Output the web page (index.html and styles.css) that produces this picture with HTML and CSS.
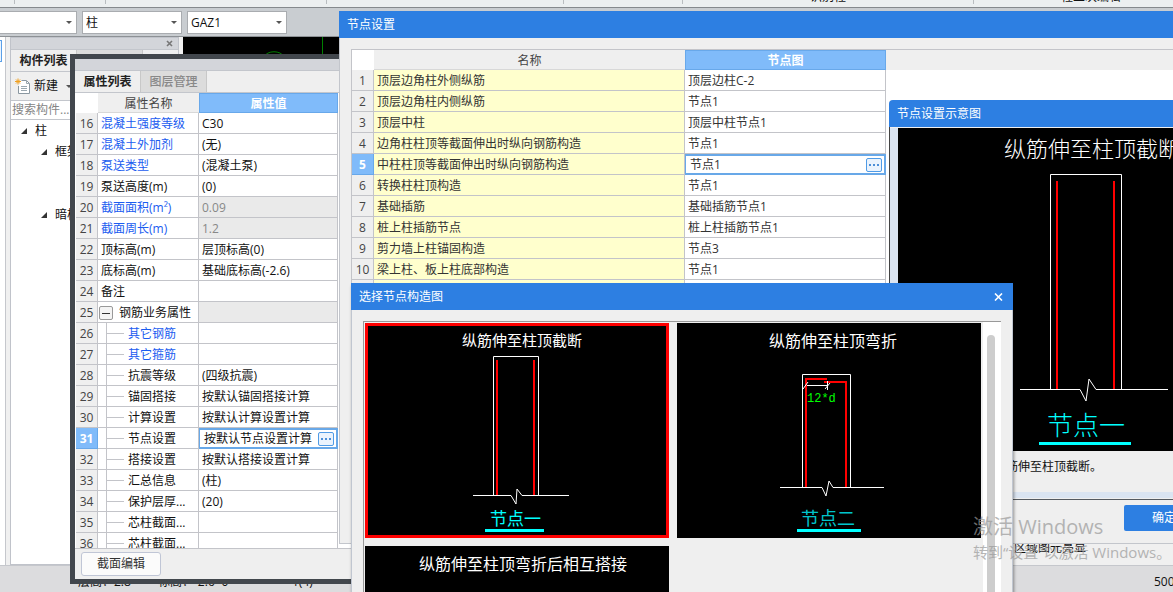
FILE: index.html
```html
<!DOCTYPE html>
<html lang="zh-CN">
<head>
<meta charset="utf-8">
<title>节点设置</title>
<link rel="stylesheet" href="styles.css">
</head>
<body>
<div class="desktop">
  <div class="app">
    <div class="ribbon">
      <span class="group g1"></span><span class="group g2"></span><span class="group g3"></span><span class="group g4"></span><span class="group g5"></span><span class="group g6">识别柱</span><span class="group g7">柱二次编辑</span>
    </div>
    <div class="toolbar">
      <span class="combo first"><select aria-label="楼层"><option></option></select></span>
      <span class="combo"><select aria-label="构件类型"><option>柱</option></select></span>
      <span class="combo"><select aria-label="构件名称"><option>GAZ1</option></select></span>
    </div>
    <div class="workspace">
      <div class="rail"><button class="rail-btn" aria-label="导航"></button></div>
      <div class="panel">
        <div class="panel-title"><button class="plain" aria-label="关闭"><svg width="7" height="7" viewBox="0 0 7 7"><path d="M1 1l5 5M6 1l-5 5" stroke="#777" stroke-width="1.6"/></svg></button></div>
        <div class="tabs"><button class="tab active">构件列表</button><button class="tab">&nbsp;</button></div>
        <div class="panel-tools">
          <button class="plain new-btn">
            <svg width="16" height="17" viewBox="0 0 16 17"><path d="M6.500 2.500H11.500L14.500 5.500V15.500H3.500V8" fill="#fff" stroke="#8a97a0"/><path d="M11.500 2.500V5.500H14.500M6 8.500H12M6 10.500H12M6 12.500H12" fill="none" stroke="#9aa7af"/><path d="M0 3.500H6M3 .5V6.500M1 1.500L5 5.500M5 1.500L1 5.500" stroke="#f0a020"/></svg>
            <span>新建</span><i class="arrow"></i>
          </button>
        </div>
        <input class="search" type="text" placeholder="搜索构件..." aria-label="搜索构件">
        <ul class="tree">
          <li><i class="tri"></i>柱</li>
          <li class="sub"><i class="tri"></i>框架柱</li>
          <li class="gap"></li>
          <li class="gap"></li>
          <li class="sub"><i class="tri"></i>暗柱</li>
        </ul>
      </div>
      <div class="canvas"><svg width="160" height="20" viewBox="0 0 160 20"><path d="M139.500 0V20" stroke="#008000"/><path d="M81 20C84 13 98 13 101 20" fill="none" stroke="#008000"/></svg></div>
      <div class="canvas-note">区域图元亮显</div>
    </div>
    <div class="status"><span class="s1">层高：2.8</span><span class="s2">标高：-2.6~0</span><span class="s3">1(4)</span><span class="s4">500</span></div>
  </div>

  <section class="prop-window">
    <div class="prop-title"></div>
    <div class="tabs"><button class="tab active">属性列表</button><button class="tab">图层管理</button></div>
    <div class="prop-body">
      <table class="grid prop-grid">
        <colgroup><col class="c-num"><col class="c-name"><col class="c-val"></colgroup>
        <thead><tr><th class="corner"></th><th>属性名称</th><th class="hot">属性值</th></tr></thead>
        <tbody>
          <tr><th>16</th><td class="link">混凝土强度等级</td><td>C30</td></tr>
          <tr><th>17</th><td class="link">混凝土外加剂</td><td>(无)</td></tr>
          <tr><th>18</th><td class="link">泵送类型</td><td>(混凝土泵)</td></tr>
          <tr><th>19</th><td>泵送高度(m)</td><td>(0)</td></tr>
          <tr><th>20</th><td class="link">截面面积(m²)</td><td class="off">0.09</td></tr>
          <tr><th>21</th><td class="link">截面周长(m)</td><td class="off">1.2</td></tr>
          <tr><th>22</th><td>顶标高(m)</td><td>层顶标高(0)</td></tr>
          <tr><th>23</th><td>底标高(m)</td><td>基础底标高(-2.6)</td></tr>
          <tr><th>24</th><td>备注</td><td></td></tr>
          <tr><th>25</th><td class="parent"><div class="branch"><button class="fold" aria-label="折叠"></button>钢筋业务属性</div></td><td class="off"></td></tr>
          <tr><th>26</th><td class="child link">其它钢筋</td><td></td></tr>
          <tr><th>27</th><td class="child link">其它箍筋</td><td></td></tr>
          <tr><th>28</th><td class="child">抗震等级</td><td>(四级抗震)</td></tr>
          <tr><th>29</th><td class="child">锚固搭接</td><td>按默认锚固搭接计算</td></tr>
          <tr><th>30</th><td class="child">计算设置</td><td>按默认计算设置计算</td></tr>
          <tr class="current"><th>31</th><td class="child">节点设置</td><td class="edit"><div class="cell">按默认节点设置计算<button class="more" aria-label="更多"><i></i><i></i><i></i></button></div></td></tr>
          <tr><th>32</th><td class="child">搭接设置</td><td>按默认搭接设置计算</td></tr>
          <tr><th>33</th><td class="child">汇总信息</td><td>(柱)</td></tr>
          <tr><th>34</th><td class="child">保护层厚...</td><td>(20)</td></tr>
          <tr><th>35</th><td class="child">芯柱截面...</td><td></td></tr>
          <tr><th>36</th><td class="child">芯柱截面...</td><td></td></tr>
        </tbody>
      </table>
    </div>
    <div class="prop-foot"><button class="section-btn">截面编辑</button></div>
  </section>

  <section class="node-dialog">
    <header class="bar">节点设置</header>
    <div class="node-body">
      <table class="grid node-grid">
        <colgroup><col class="c-num"><col class="c-title"><col class="c-node"><col></colgroup>
        <thead><tr><th class="corner"></th><th>名称</th><th class="hot">节点图</th><th class="rest"></th></tr></thead>
        <tbody>
          <tr><th>1</th><td class="name">顶层边角柱外侧纵筋</td><td>顶层边柱C-2</td><td class="rest"></td></tr>
          <tr><th>2</th><td class="name">顶层边角柱内侧纵筋</td><td>节点1</td><td class="rest"></td></tr>
          <tr><th>3</th><td class="name">顶层中柱</td><td>顶层中柱节点1</td><td class="rest"></td></tr>
          <tr><th>4</th><td class="name">边角柱柱顶等截面伸出时纵向钢筋构造</td><td>节点1</td><td class="rest"></td></tr>
          <tr class="current"><th>5</th><td class="name">中柱柱顶等截面伸出时纵向钢筋构造</td><td class="edit"><div class="cell">节点1<button class="more" aria-label="更多"><i></i><i></i><i></i></button></div></td><td class="rest"></td></tr>
          <tr><th>6</th><td class="name">转换柱柱顶构造</td><td>节点1</td><td class="rest"></td></tr>
          <tr><th>7</th><td class="name">基础插筋</td><td>基础插筋节点1</td><td class="rest"></td></tr>
          <tr><th>8</th><td class="name">桩上柱插筋节点</td><td>桩上柱插筋节点1</td><td class="rest"></td></tr>
          <tr><th>9</th><td class="name">剪力墙上柱锚固构造</td><td>节点3</td><td class="rest"></td></tr>
          <tr><th>10</th><td class="name">梁上柱、板上柱底部构造</td><td>节点1</td><td class="rest"></td></tr>
          <tr><th></th><td class="name"></td><td></td><td class="rest"></td></tr>
        </tbody>
      </table>
    </div>
    <footer class="node-foot"><button class="primary">确定</button></footer>
  </section>

  <section class="preview">
    <header class="bar">节点设置示意图</header>
    <div class="preview-body">
      <svg class="big-draw" width="340" height="323" viewBox="0 0 340 323">
        <rect width="340" height="323" fill="#000"/>
        <text x="106" y="29" class="cad light" font-size="22">纵筋伸至柱顶截断</text>
        <path d="M152.500 261V46.500H223.500V261M122 261.500H182L188 273L191 251L198 261.500H270" class="white"/>
        <path d="M159 53V261M216 53V261" class="bars"/>
        <text x="149" y="307" class="cad light cyan" font-size="26">节点一</text>
        <rect x="141" y="314" width="92" height="3" fill="#0ff"/>
      </svg>
      <p class="preview-text">纵筋伸至柱顶截断。</p>
    </div>
  </section>

  <section class="picker">
    <header class="bar">选择节点构造图<button class="plain" aria-label="关闭"><svg width="9" height="8" viewBox="0 0 9 8"><path d="M1 .5L8 7.500M8 .5L1 7.500" stroke="#fff" stroke-width="1.6"/></svg></button></header>
    <div class="picker-list">
      <div class="cards">
        <svg class="card" width="304" height="215" viewBox="0 0 304 215">
          <rect width="304" height="215" fill="#000"/>
          <rect x="1.500" y="1.500" width="301" height="212" fill="none" stroke="#f00" stroke-width="3"/>
          <text x="97" y="23" class="cad" font-size="15">纵筋伸至柱顶截断</text>
          <path d="M128.500 172V33.500H173.500V172M108 172.500H146L151 181L152 166L157 172.500H204" class="white"/>
          <path d="M132 37V172M169 37V172" class="bars"/>
          <text x="125" y="202" class="cad cyan" font-size="17">节点一</text>
          <rect x="120" y="206" width="59" height="3" fill="#0ff"/>
        </svg>
        <svg class="card" width="304" height="215" viewBox="0 0 304 215">
          <rect width="304" height="215" fill="#000"/>
          <text x="92" y="24" class="cad" font-size="16">纵筋伸至柱顶弯折</text>
          <path d="M125.500 164V51.500H173.500V164M103 164.500H145L149 173L152 158L156 164.500H207" class="white"/>
          <path d="M129 164V56H150M147 59H169V164" class="bars"/>
          <path d="M130 62.500H150M126 66L131 59M150.500 58V67M148 66L153 60" class="white"/>
          <text x="130" y="79" class="dim" font-size="12">12*d</text>
          <text x="124" y="202" class="cad cyan dark" font-size="18">节点二</text>
          <rect x="120" y="206" width="64" height="3" fill="#0ff"/>
        </svg>
        <svg class="card" width="304" height="215" viewBox="0 0 304 215">
          <rect width="304" height="215" fill="#000"/>
          <text x="54" y="24" class="cad" font-size="16">纵筋伸至柱顶弯折后相互搭接</text>
        </svg>
      </div>
      <div class="scroll"><div class="thumb"></div></div>
    </div>
  </section>

  <div class="watermark"><div class="w1">激活 Windows</div><div class="w2">转到“设置”以激活 Windows。</div></div>
</div>
</body>
</html>
```
FILE: styles.css
```css
* { box-sizing: border-box; }
body {
  margin: 0;
  font: 12px/20px "Open Sans", "Noto Sans CJK SC", sans-serif;
  color: #111;
}
button, input, select { font: inherit; color: inherit; }
button { padding: 0; }
.plain { border: 0; background: none; display: flex; align-items: center; }
.desktop { position: relative; height: 100vh; overflow: hidden; background: #f0f0f0; }
.app { display: flex; flex-direction: column; height: 100%; }

.ribbon { display: flex; flex: none; height: 8px; background: #eceff0; border-bottom: 1px solid #85898d; }
.group { flex: none; height: 4px; border-right: 1px solid #b9bdc0; display: flex; align-items: flex-end; justify-content: center; line-height: 14px; overflow: hidden; }
.g1 { width: 15px; }
.g2 { width: 91px; }
.g3 { width: 221px; }
.g4 { width: 237px; }
.g5 { width: 119px; }
.g6 { width: 291px; }
.g7 { width: 235px; }

.toolbar { display: flex; flex: none; gap: 5px; height: 29px; padding-top: 3px; background: #c9cdd1; border-bottom: 1px solid #8d9195; }
.combo { position: relative; width: 100px; height: 23px; }
.combo.first { width: 77px; }
.combo::after { content: ""; position: absolute; right: 5px; top: 10px; border: 3px solid transparent; border-top: 3px solid #555; border-bottom: 0; }
.combo select { width: 100%; height: 100%; appearance: none; border: 1px solid #a9acb0; border-radius: 0; background: #fff; padding: 0 3px; line-height: 20px; color: #111; }
.combo.first select { border-left: 0; }

.workspace { display: flex; flex: 1; min-height: 0; position: relative; }
.rail { width: 6px; margin-right: 4px; background: #fff; border-right: 1px solid #c5c7cc; }
.rail-btn { display: block; width: 2px; height: 22px; margin-top: 3px; border: 1px solid #5ba0e8; border-left: 0; background: #eaf4ff; }
.panel { width: 169px; display: flex; flex-direction: column; border: 1px solid #c0c3ca; background: #fff; margin-right: 4px; }
.panel-title { height: 11px; background: #d3d5da; display: flex; justify-content: flex-end; align-items: center; padding-right: 5px; }
.tabs { display: flex; flex: none; height: 23px; background: #efefef; border-top: 1px solid #c3c6cc; border-bottom: 1px solid #c3c6cc; }
.tab { width: 66px; border: 0; border-right: 1px solid #c8c8c8; background: #dcdcdc; color: #888; font-weight: 500; padding-top: 1px; }
.tab.active { background: #efefef; color: #222; font-weight: 700; }
.panel-tools { height: 29px; background: #efefef; border-bottom: 1px solid #c3c6cc; display: flex; padding-left: 4px; }
.new-btn span { margin: 0 8px 0 3px; }
.arrow { border: 3px solid transparent; border-top-color: #555; border-bottom: 0; }
.search { height: 19px; border: 0; border-bottom: 1px solid #c3c6cc; padding: 0 1px; background: #fff; }
.search::placeholder { color: #858585; opacity: 1; }
.tree { list-style: none; margin: 0; padding: 0; }
.tree li { height: 21px; padding-left: 10px; display: flex; align-items: center; gap: 8px; white-space: nowrap; }
.tree .sub { padding-left: 30px; }
.tri { border-left: 6px solid transparent; border-bottom: 6px solid #333; }
.canvas { flex: 1; background: #000; margin-bottom: 22px; }
.canvas svg { display: block; }
.canvas-note { position: absolute; left: 1014px; bottom: 7px; }
.status { flex: none; display: flex; height: 27px; background: #dcdcde; border-top: 1px solid #c5c7cc; line-height: 32px; padding-left: 78px; white-space: nowrap; }
.s1 { width: 80px; }
.s2 { width: 134px; }
.s3 { flex: 1; }
.s4 { width: 19px; }

.grid { border-collapse: separate; border-spacing: 0; table-layout: fixed; }
.grid th, .grid td { height: 21px; padding: 2px 0 0 3px; border-right: 1px solid #c3c4c9; border-bottom: 1px solid #c3c4c9; background: #fff; white-space: nowrap; overflow: hidden; text-align: left; line-height: 18px; font-weight: 400; }
.grid th { background: #efefef; text-align: center; padding: 2px 0 0; color: #444; }
.grid thead th { height: 20px; line-height: 16px; border-right: 0; border-bottom-color: #d8d8d8; }
.grid .corner { background: #fff; border-bottom: 0; }
.grid .hot { background: #80bbfa; color: #fff; font-weight: 700; border: 1px solid #68a8ea; }
.grid .current th { background: #80bbfa; color: #fff; font-weight: 700; border-color: #68a8ea; }
.grid .link { color: #1a5cf0; }
.grid .off { background: #eaeaea; color: #888; }
.grid .edit { padding: 0; border: 0; }
.cell { display: flex; align-items: center; justify-content: space-between; height: 21px; margin-left: -1px; border: 2px solid #68a8e8; padding: 0 2px 0 4px; }
.more { width: 16px; height: 14px; border: 1px solid #4f9be6; border-radius: 2px; background: #eaf3fd; display: flex; align-items: center; justify-content: center; gap: 2px; }
.more i { width: 2px; height: 2px; background: #4c8fd8; }
.c-num { width: 22px; }

.prop-window { position: absolute; left: 70px; top: 54px; bottom: 8px; width: 320px; border: 5px solid #42474d; display: flex; flex-direction: column; background: #fff; }
.prop-title { height: 11px; background: #d3d5da; }
.prop-body { flex: 1; min-height: 0; overflow: hidden; padding-left: 1px; }
.prop-grid { width: 262px; }
.prop-grid .c-name { width: 101px; }
.prop-grid .child { padding-left: 30px; background: linear-gradient(#c3c4c9, #c3c4c9) 8px 0 / 1px 100% no-repeat, linear-gradient(#c3c4c9, #c3c4c9) 8px 10px / 18px 1px no-repeat, #fff; }
.prop-grid .parent { padding-left: 1px; }
.branch { display: flex; align-items: center; gap: 6px; }
.fold { width: 14px; height: 14px; border: 1px solid #999; border-radius: 2px; background: linear-gradient(#333, #333) center / 8px 1px no-repeat, #f4f4f4; }
.prop-foot { height: 31px; background: #efefef; border-top: 1px solid #c3c4c9; padding: 3px 6px; }
.section-btn { width: 80px; height: 24px; border: 1px solid #c0c6d6; border-radius: 3px; background: #fbfbfb; color: #333; }

.bar { display: flex; flex: none; align-items: center; justify-content: space-between; height: 27px; padding: 0 10px 0 8px; background: #2d7fe2; color: #fff; }
.node-dialog { position: absolute; left: 339px; right: -45px; top: 11px; bottom: 48px; display: flex; flex-direction: column; background: #efefef; border-bottom: 1px solid #c3c6cc; }
.node-body { flex: 1; min-height: 0; padding: 11px 0 0 11px; border-left: 1px solid #c3c6cc; overflow: hidden; }
.node-grid { width: 100%; border-top: 1px solid #c3c4c9; border-left: 1px solid #c3c4c9; }
.node-grid td { color: #333; }
.node-grid .c-title { width: 311px; }
.node-grid .c-node { width: 201px; }
.node-grid .name { background: #ffffcd; }
.node-grid td.rest { border: 0; }
.node-grid th.rest { border: 0; }
.node-foot { height: 43px; padding: 5px 14px 0 0; border-left: 1px solid #c3c6cc; display: flex; justify-content: flex-end; }
.primary { width: 80px; height: 26px; border: 0; border-radius: 2px; background: #2d7fe2; color: #fff; }

.preview { position: absolute; left: 889px; right: -65px; top: 100px; background: #efefef; border-bottom: 1px solid #555a60; border-radius: 4px 0 0; overflow: hidden; }
.preview-body { border-left: 1px solid #444; border-bottom: 1px solid #efefef; padding-top: 1px; }
.preview-body::after { content: ""; display: block; height: 6px; background: #dae4f1; }
.big-draw { display: block; width: 100%; border-left: 8px solid #dae4f1; }
.preview-text { margin: 0; padding: 6px 8px 15px 96px; border-left: 8px solid #dae4f1; }
.cad { font-family: "Noto Sans CJK SC", sans-serif; fill: #fff; }
.light { font-weight: 300; }
.cyan { fill: #0ff; }
.dark { fill: #00c4cc; }
.dim { font-family: "Liberation Mono", monospace; fill: #0f0; }
.white { fill: none; stroke: #fff; stroke-width: 1; }
.bars { fill: none; stroke: #f00; stroke-width: 2; }

.picker { position: absolute; left: 351px; top: 283px; bottom: 0; width: 662px; display: flex; flex-direction: column; background: #efefef; box-shadow: 1px 3px 3px #0006; }
.picker-list { flex: 1; min-height: 0; padding: 11px 11px 0; border: 1px solid #c0c6d0; border-width: 0 1px; display: flex; overflow: hidden; }
.cards { flex: 1; border: 1px solid #999; border-right: 0; border-bottom: 0; padding: 1px; display: flex; flex-wrap: wrap; align-content: flex-start; gap: 8px; }
.card { display: block; flex: none; }
.scroll { width: 18px; border-top: 1px solid #999; background: #fff; padding: 13px 6px 0 4px; display: flex; }
.thumb { flex: 1; border-radius: 4px 4px 0 0; background: #cdcdcd; }

.watermark { position: absolute; left: 973px; top: 512px; color: #999; opacity: .7; white-space: nowrap; pointer-events: none; }
.w1 { font-size: 20px; line-height: 30px; }
.w2 { font-size: 15px; line-height: 20px; }
```
